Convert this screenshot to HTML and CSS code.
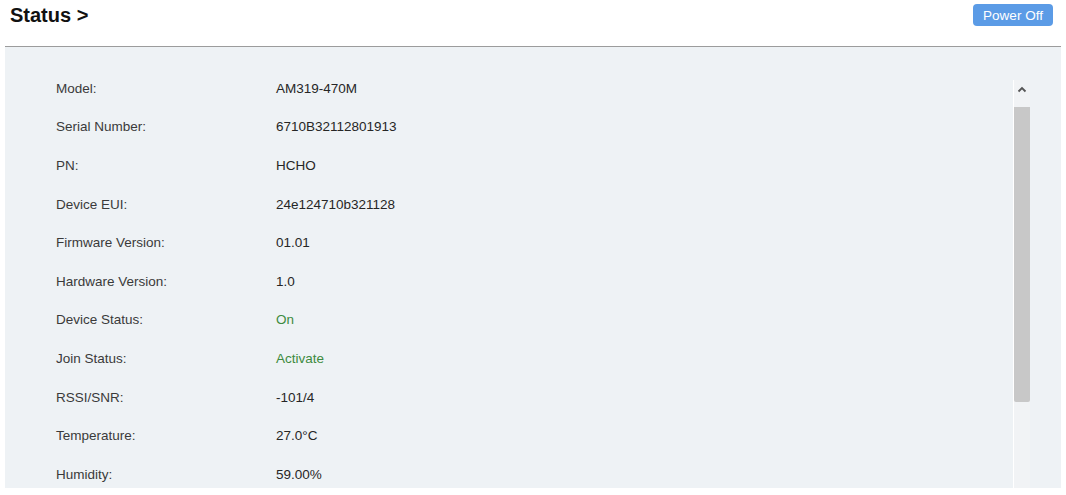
FILE: index.html
```html
<!DOCTYPE html>
<html lang="en">
<head>
    <meta charset="UTF-8">
    <title>Status</title>
    <link rel="stylesheet" href="styles.css">
</head>
<body>
    <div class="header">
        <h1>Status &gt;</h1>
        <button class="power-btn">Power Off</button>
    </div>

    <div class="panel">
        <div class="rows">
            <div class="row"><span class="label">Model:</span><span class="value">AM319-470M</span></div>
            <div class="row"><span class="label">Serial Number:</span><span class="value">6710B32112801913</span></div>
            <div class="row"><span class="label">PN:</span><span class="value">HCHO</span></div>
            <div class="row"><span class="label">Device EUI:</span><span class="value">24e124710b321128</span></div>
            <div class="row"><span class="label">Firmware Version:</span><span class="value">01.01</span></div>
            <div class="row"><span class="label">Hardware Version:</span><span class="value">1.0</span></div>
            <div class="row"><span class="label">Device Status:</span><span class="value ok">On</span></div>
            <div class="row"><span class="label">Join Status:</span><span class="value ok">Activate</span></div>
            <div class="row"><span class="label">RSSI/SNR:</span><span class="value">-101/4</span></div>
            <div class="row"><span class="label">Temperature:</span><span class="value">27.0°C</span></div>
            <div class="row"><span class="label">Humidity:</span><span class="value">59.00%</span></div>
        </div>

        <div class="scrollbar">
            <div class="scroll-arrow">
                <svg width="10" height="7" viewBox="0 0 10 7">
                    <path d="M1.5 5.5 L5 2 L8.5 5.5" fill="none" stroke="#555" stroke-width="1.8"/>
                </svg>
            </div>
            <div class="scroll-thumb"></div>
        </div>
    </div>
</body>
</html>
```

FILE: styles.css
```css
body {
    margin: 0;
    font-family: "Liberation Sans", Arial, sans-serif;
    background: #fff;
    color: #333;
}
.header {
    display: flex;
    align-items: flex-start;
    justify-content: space-between;
    height: 46px;
    margin: 0 5px;
    border-bottom: 1px solid #9c9c9c;
}
.header h1 {
    margin: 4px 0 0 5px;
    font-size: 20px;
    font-weight: bold;
    color: #111;
}
.power-btn {
    margin: 4px 8px 0 0;
    width: 80px;
    height: 22px;
    padding: 0;
    border: none;
    border-radius: 4px;
    background: #5b9be6;
    color: #fff;
    font-family: "Liberation Sans", Arial, sans-serif;
    font-size: 13.5px;
}
.panel {
    display: flex;
    margin: 0 5px;
    height: 441px;
    background: #eef2f5;
}
.rows {
    flex: 1;
    padding: 22px 0 0 51px;
}
.row {
    display: flex;
    height: 38.6px;
    align-items: center;
    font-size: 13.5px;
}
.label {
    width: 220px;
    color: #3a3a3a;
}
.value {
    color: #262626;
}
.value.ok {
    color: #3d8b40;
}
.scrollbar {
    width: 16px;
    margin-right: 31px;
    margin-top: 33px;
    border-left: 1px solid #fff;
    background: #f1f3f5;
}
.scroll-arrow {
    display: flex;
    justify-content: center;
    align-items: flex-start;
    height: 21px;
    padding-top: 6px;
}
.scroll-thumb {
    height: 295px;
    background: #c8c8c8;
    border-radius: 0 0 2px 2px;
}
```
